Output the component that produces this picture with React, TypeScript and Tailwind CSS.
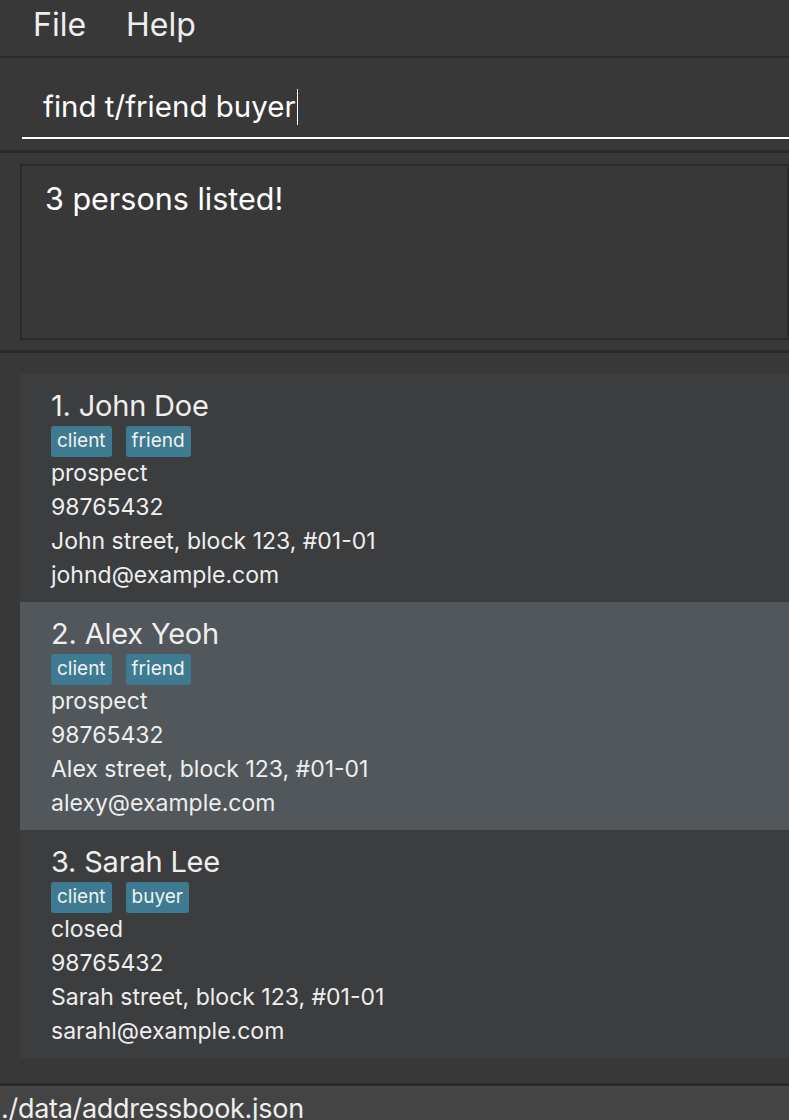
const persons = [
  {
    name: 'John Doe',
    tags: ['client', 'friend'],
    status: 'prospect',
    phone: '98765432',
    address: 'John street, block 123, #01-01',
    email: 'johnd@example.com',
  },
  {
    name: 'Alex Yeoh',
    tags: ['client', 'friend'],
    status: 'prospect',
    phone: '98765432',
    address: 'Alex street, block 123, #01-01',
    email: 'alexy@example.com',
  },
  {
    name: 'Sarah Lee',
    tags: ['client', 'buyer'],
    status: 'closed',
    phone: '98765432',
    address: 'Sarah street, block 123, #01-01',
    email: 'sarahl@example.com',
  },
]

function PersonCard({ index, person, selected }: { index: number; person: (typeof persons)[number]; selected: boolean }) {
  return (
    <div className={`h-[228px] pl-[31px] pt-[14px] text-[#eeeeee] ${selected ? 'bg-[#51575a]' : 'bg-[#3c3d3f]'}`}>
      <div className="text-[29px] leading-[36px] tracking-[-0.2px]">
        {index}. {person.name}
      </div>
      <div className="mt-[2px] flex gap-[14px]">
        {person.tags.map((t) => (
          <span key={t} className="flex h-[31px] items-center rounded-[3px] bg-[#3e7b91] px-[6px] text-[19px] text-[#f2f2f2]">
            {t}
          </span>
        ))}
      </div>
      <div className="-mt-[1px] text-[23px] leading-[34px]">
        <div>{person.status}</div>
        <div>{person.phone}</div>
        <div>{person.address}</div>
        <div>{person.email}</div>
      </div>
    </div>
  )
}

export default function App() {
  return (
    <div className="flex h-[1120px] w-[789px] flex-col overflow-hidden bg-[#383838] font-['Inter',sans-serif] text-white">
      <div className="flex h-[56px] shrink-0 items-center gap-[40px] pb-[6px] pl-[33px] text-[32px] text-[#eeeeee]">
        <span>File</span>
        <span>Help</span>
      </div>
      <div className="h-[2px] shrink-0 bg-[#2a2a2a]" />

      <div className="h-[92px] shrink-0 pl-[22px] pt-[18px]">
        <div className="flex h-[63px] items-center border-b-2 border-white pl-[21px] text-[29.5px]">
          find t/friend buyer
          <span className="ml-[1px] h-[36px] w-[1px] bg-white" />
        </div>
      </div>
      <div className="h-[3px] shrink-0 bg-[#2a2a2a]" />

      <div className="h-[197px] shrink-0 pl-[20px] pt-[11px]">
        <div className="h-[176px] border-2 border-[#2b2b2b] pl-[23px] pt-[10px] text-[30.5px]">
          3 persons listed!
        </div>
      </div>
      <div className="h-[3px] shrink-0 bg-[#2a2a2a]" />

      <div className="h-[730px] shrink-0 pl-[20px] pt-[21px]">
        {persons.map((p, i) => (
          <PersonCard key={p.name} index={i + 1} person={p} selected={i === 1} />
        ))}
      </div>
      <div className="h-[3px] shrink-0 bg-[#2a2a2a]" />

      <div className="h-[34px] shrink-0 overflow-hidden bg-[#444444] pl-[1px] pt-[6px] text-[27px] leading-[34px] tracking-[-0.3px] text-[#eeeeee]">
        ./data/addressbook.json
      </div>
    </div>
  )
}
